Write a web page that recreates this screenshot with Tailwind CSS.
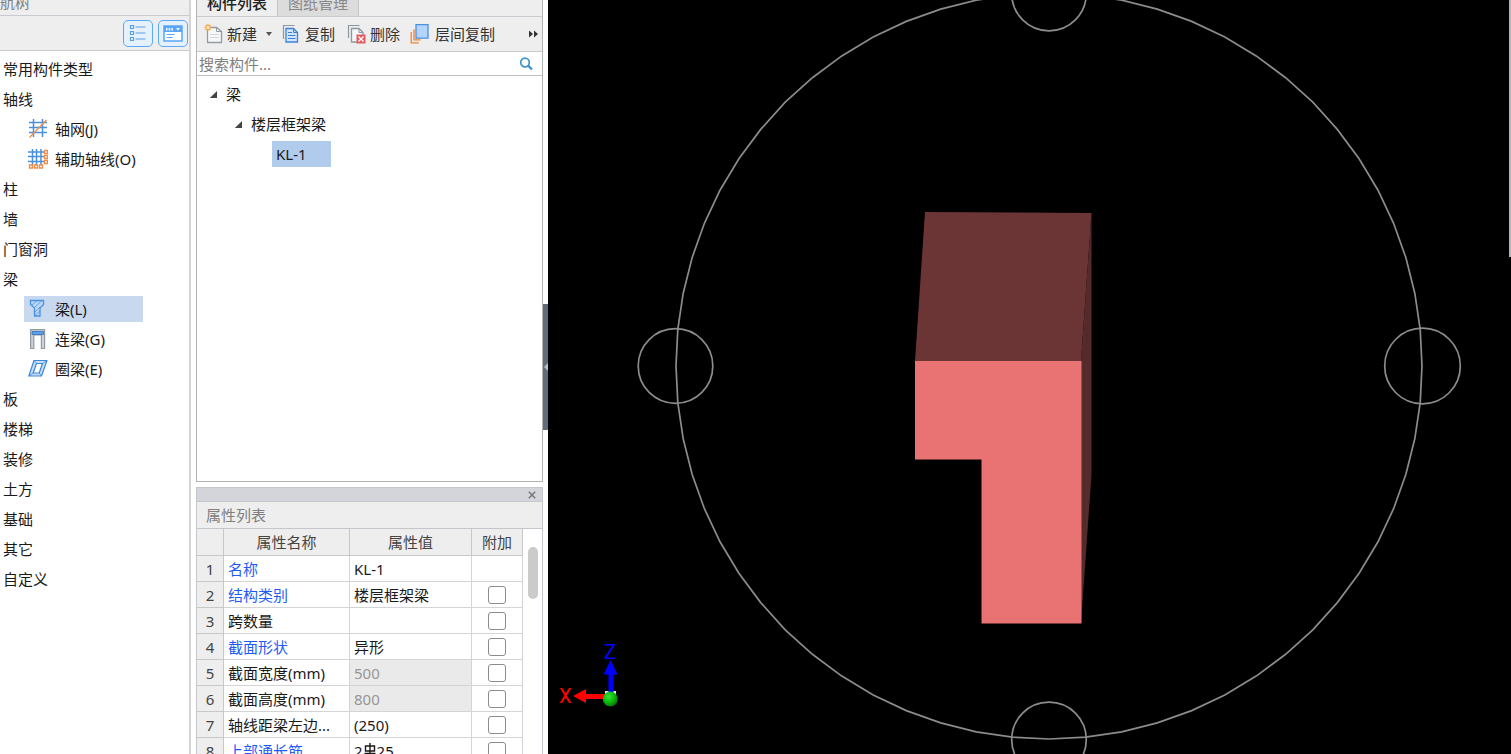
<!DOCTYPE html>
<html lang="zh-CN">
<head>
<meta charset="utf-8">
<title>构件列表</title>
<script src="https://cdn.jsdelivr.net/npm/@tailwindcss/browser@4"></script>
</head>
<body class="flex h-screen overflow-hidden bg-white font-['Noto_Sans','Noto_Sans_CJK_SC',sans-serif] text-[15px] leading-5 text-[#1a1a1a]">

<!-- Navigation tree -->
<nav class="flex w-[191px] shrink-0 flex-col border-r-2 border-[#d4d4d4]">
  <div class="flex h-4 shrink-0 items-end overflow-hidden border-b border-[#c8cad0] bg-[#eee] pb-[3px] text-[#808080]"><h2>航树</h2></div>
  <div class="flex h-[35px] shrink-0 items-center justify-end gap-[5px] border-b border-[#c8cad0] bg-[#eee] pr-px">
    <button aria-label="列表视图" class="flex h-[27px] w-[30px] items-center justify-center rounded-[5px] border border-[#5aa9fb] bg-[#e6f1fe]">
      <svg class="h-[18px] w-[18px]" viewBox="0 0 18 18" fill="none" stroke="#5a9fe0" stroke-width="1.200"><path d="M1.500 1.500h3v3h-3zM1.500 7.500h3v3h-3zM1.500 13.500h3v3h-3zM6.500 3h10M6.500 9h10M6.500 15h10"/></svg>
    </button>
    <button aria-label="面板视图" class="flex h-[27px] w-[30px] items-center justify-center rounded-[5px] border border-[#5aa9fb] bg-[#e6f1fe]">
      <svg class="h-[17px] w-[20px]" viewBox="0 0 20 17"><path fill="#fff" stroke="#5aa5f5" stroke-width="1.500" d="M1 1h18v15H1z"/><path fill="#5aa5f5" d="M1 1h18v6H1z"/><path fill="#fff" d="M3 3h1.500v2.500H3zM5.700 3h1.500v2.500H5.700zM8.400 3h1.500v2.500H8.400zM13 3h4l-2 2.500z"/><path stroke="#5aa5f5" d="M3.500 9.500h8M3.500 12.500h6"/></svg>
    </button>
  </div>
  <ul class="flex flex-col pt-[3px] *:flex *:h-[30px] *:shrink-0 *:items-center">
    <li class="pl-[3px]">常用构件类型</li>
    <li class="pl-[3px]">轴线</li>
    <li class="pl-6"><a href="#" class="flex h-[26px] items-center gap-1.5 pl-1"><svg class="h-5 w-5" viewBox="0 0 20 20" fill="none"><path stroke="#4a90dc" stroke-width="1.500" d="M5.500 0v18M14.500 0v18M1 3.500h18M1 8.500h18M1 13.500h18"/><path stroke="#f08c46" stroke-width="1.300" d="M1.500 18.500 18.500 1"/></svg><span class="pl-px">轴网(J)</span></a></li>
    <li class="pl-6"><a href="#" class="flex h-[26px] items-center gap-1.5 pl-1"><svg class="h-5 w-5" viewBox="0 0 20 20" fill="none"><path stroke="#4a90dc" stroke-width="1.500" d="M4.500 0v16M8.500 0v16M13 0v16M0 3h16M0 7.500h16M0 12.500h16"/><path fill="#fff" stroke="#f08c46" stroke-width="1.300" d="M1.500 16h3v3h-3zM6.500 16h3v3h-3zM11.500 16h3v3h-3zM16.500 1.500h3v3h-3zM16.500 6.500h3v3h-3zM16.500 11.500h3v3h-3z"/></svg><span class="pl-px">辅助轴线(O)</span></a></li>
    <li class="pl-[3px]">柱</li>
    <li class="pl-[3px]">墙</li>
    <li class="pl-[3px]">门窗洞</li>
    <li class="pl-[3px]">梁</li>
    <li class="pl-6"><a href="#" aria-current="page" class="flex h-[26px] w-[119px] items-center gap-1.5 bg-[#c8d8ef] pl-1"><svg class="h-5 w-5" viewBox="0 0 20 20" fill="#b9d8f8"><path stroke="#4a90dc" stroke-width="1.300" d="M2.500 1.500h13v4l-3.500 3.500v8H6.500V9L2.500 5.500z"/><path fill="none" stroke="#4a90dc" stroke-width=".8" d="m4 6 5-4.500M7 8l7-6.500M7 13l5-5M7 16.500l5-4.500"/></svg><span class="pl-px">梁(L)</span></a></li>
    <li class="pl-6"><a href="#" class="flex h-[26px] items-center gap-1.5 pl-1"><svg class="h-5 w-5" viewBox="0 0 20 20"><path fill="#cdd3d8" stroke="#8f9aa3" stroke-width="1.200" d="M2.600.6h14v19h-3.200V6H5.800v13.600H2.600z"/><path fill="#5d9fe6" stroke="#2f74c0" stroke-width=".8" d="M4 2.500h11.500v3H4z"/></svg><span class="pl-px">连梁(G)</span></a></li>
    <li class="pl-6"><a href="#" class="flex h-[26px] items-center gap-1.5 pl-1"><svg class="h-5 w-5" viewBox="0 0 20 20" stroke="#3d86d8" stroke-width="1.200" stroke-linejoin="round"><path fill="#c6defa" d="M6 1.500h13L13.500 17H.8z"/><path fill="#fff" d="M8.500 4.500h6l-3.300 9.500h-6z"/><path d="m6 1.500 2.500 3M19 1.500l-4.500 3M.8 17l4.400-3M13.500 17l-2.300-3" stroke-width=".8"/></svg><span class="pl-px">圈梁(E)</span></a></li>
    <li class="pl-[3px]">板</li>
    <li class="pl-[3px]">楼梯</li>
    <li class="pl-[3px]">装修</li>
    <li class="pl-[3px]">土方</li>
    <li class="pl-[3px]">基础</li>
    <li class="pl-[3px]">其它</li>
    <li class="pl-[3px]">自定义</li>
  </ul>
</nav>

<!-- Component list and properties -->
<aside class="flex w-[352px] shrink-0 flex-col gap-[5px] pl-[5px]">
  <section class="flex min-h-0 flex-1 flex-col border-x border-b border-[#b4b4b4]">
    <div role="tablist" class="flex h-[17px] shrink-0 items-end overflow-hidden border-b border-[#c8cad0] bg-[#eee]">
      <button role="tab" aria-selected="true" class="flex w-20 items-end justify-center pb-[3px] font-medium text-[#222]">构件列表</button>
      <button role="tab" class="flex w-[82px] items-end justify-center border-x border-[#c4c6ca] bg-[#dcdcdc] pb-[3px] text-[#888]">图纸管理</button>
    </div>
    <div class="flex h-[35px] shrink-0 items-center border-b border-[#c8cad0] bg-[#eee] pl-[7px] text-[#333]">
      <button class="flex items-center gap-1"><svg class="h-5 w-[19px]" viewBox="0 0 19 20"><path fill="#f6f7f8" stroke="#939ca4" stroke-width="1.300" d="M3.500 3.500h9l5 4v11h-14z"/><path fill="none" stroke="#939ca4" d="M12.500 3.500v4h5"/><path stroke="#d5dade" d="M6 10.500h9M6 13.500h9"/><path stroke="#f9a63a" stroke-width="1.300" d="M4 0v7M.5 3.500h7M1.500 1l5 5M6.500 1l-5 5"/><circle cx="4" cy="3.500" r="1.500" fill="#fff0d0"/></svg>新建<svg class="ml-1 h-2 w-2" viewBox="0 0 8 8"><path fill="#555" d="M1 2h6L4 6z"/></svg></button>
      <button class="ml-[9px] flex items-center gap-1.5"><svg class="h-5 w-[17px]" viewBox="0 0 17 20"><path fill="none" stroke="#8c979f" stroke-width="1.200" d="M1.500 15V1.500h11"/><path fill="#d3e5fb" stroke="#3d82d9" stroke-width="1.300" d="M4 4.500h7.500l4 4v9.500H4z"/><path fill="none" stroke="#3d82d9" d="M11.500 4.500v4h4M6 8.500h4M6 11.500h7.500M6 14.500h7.500"/></svg>复制</button>
      <button class="ml-3 flex items-center gap-1"><svg class="h-5 w-[19px]" viewBox="0 0 19 20"><path fill="none" stroke="#8c979f" stroke-width="1.200" d="M1.500 14V1.500h11"/><path fill="#f6f7f8" stroke="#8c979f" stroke-width="1.300" d="M4.500 4.500H12l4 4V18H4.500z"/><path fill="none" stroke="#8c979f" d="M12 4.500v4h4"/><path fill="#e25b60" d="M9.500 10.500h9v9h-9z"/><path stroke="#fff" stroke-width="1.400" d="m11.500 12.500 5 5m0-5-5 5"/></svg>删除</button>
      <button class="ml-2.5 flex items-center gap-1.5"><svg class="h-5 w-[19px]" viewBox="0 0 19 20"><path fill="none" stroke="#f08232" stroke-width="1.300" d="M1.200 8v10.800h7.500M4 5.500v10.300h6.500"/><path fill="#b4d5fb" stroke="#4a90e0" stroke-width="1.300" d="M6 .7h12v13.500H6z"/></svg>层间复制</button>
      <button aria-label="更多" class="mr-1 ml-auto"><svg class="h-2 w-[10px]" viewBox="0 0 10 8"><path fill="#333" d="m1 .5 4 3.500-4 3.500zM6 .5 10 4 6 7.500z"/></svg></button>
    </div>
    <label class="flex h-6 shrink-0 items-center border-b border-[#c0c0c0] bg-white pr-[9px] pl-0.5">
      <input type="text" aria-label="搜索构件" placeholder="搜索构件..." class="min-w-0 flex-1 outline-none placeholder:text-[#808080]">
      <svg class="h-[14px] w-[14px]" viewBox="0 0 14 14" fill="none" stroke="#3f94c8"><circle cx="6" cy="5.500" r="4.300" stroke-width="1.700"/><path stroke-width="2.400" d="m9 8.500 4 4"/></svg>
    </label>
    <ul class="flex flex-1 flex-col pt-[3px] *:flex *:h-[30px] *:shrink-0 *:items-center">
      <li class="gap-2 pl-3"><svg class="h-[9px] w-[9px]" viewBox="0 0 9 9"><path fill="#444" d="M8 1v7H.8z"/></svg>梁</li>
      <li class="gap-2 pl-[37px]"><svg class="h-[9px] w-[9px]" viewBox="0 0 9 9"><path fill="#444" d="M8 1v7H.8z"/></svg>楼层框架梁</li>
      <li class="pl-[75px]"><a href="#" class="flex h-[26px] w-[59px] items-center bg-[#b1cbec] pl-1">KL-1</a></li>
    </ul>
  </section>

  <section class="flex h-[267px] shrink-0 flex-col overflow-hidden border-x border-t border-[#c4c6cb]">
    <div class="flex h-[14px] shrink-0 items-center justify-end border-b border-[#c4c6cb] bg-[#d3d5db] pr-1.5">
      <button aria-label="关闭"><svg class="h-2 w-2" viewBox="0 0 8 8"><path stroke="#777" stroke-width="1.500" d="m.8.8 6.400 6.400m0-6.400L.8 7.200"/></svg></button>
    </div>
    <h2 class="flex h-[27px] shrink-0 items-center border-b border-[#c4c6cb] bg-[#eee] pl-[9px] text-[#808080]">属性列表</h2>
    <div class="flex min-h-0 flex-1 items-start">
      <table class="w-[326px] shrink-0 table-fixed border-separate border-spacing-0 [&_td]:h-[26px] [&_td]:border-r [&_td]:border-b [&_td]:border-[#d4d4d4] [&_td]:p-0 [&_td]:pl-1 [&_td]:whitespace-nowrap [&_th]:border-r [&_th]:border-b [&_th]:border-[#c8c8c8] [&_th]:bg-[#eee] [&_th]:p-0 [&_th]:font-normal [&_th]:text-[#444]">
        <colgroup><col class="w-[27px]"><col class="w-[126px]"><col class="w-[122px]"><col class="w-[51px]"></colgroup>
        <thead><tr class="h-[27px]"><th></th><th scope="col">属性名称</th><th scope="col">属性值</th><th scope="col">附加</th></tr></thead>
        <tbody>
          <tr><th scope="row">1</th><td class="text-[#1f5cf5]">名称</td><td>KL-1</td><td></td></tr>
          <tr><th scope="row">2</th><td class="text-[#1f5cf5]">结构类别</td><td>楼层框架梁</td><td><input type="checkbox" aria-label="附加 结构类别" class="ml-3 block size-[18px] appearance-none rounded-[3px] border border-[#8c8c8c] bg-white"></td></tr>
          <tr><th scope="row">3</th><td>跨数量</td><td></td><td><input type="checkbox" aria-label="附加 跨数量" class="ml-3 block size-[18px] appearance-none rounded-[3px] border border-[#8c8c8c] bg-white"></td></tr>
          <tr><th scope="row">4</th><td class="text-[#1f5cf5]">截面形状</td><td>异形</td><td><input type="checkbox" aria-label="附加 截面形状" class="ml-3 block size-[18px] appearance-none rounded-[3px] border border-[#8c8c8c] bg-white"></td></tr>
          <tr><th scope="row">5</th><td>截面宽度(mm)</td><td class="bg-[#eaeaea] text-[#969696]">500</td><td><input type="checkbox" aria-label="附加 截面宽度" class="ml-3 block size-[18px] appearance-none rounded-[3px] border border-[#8c8c8c] bg-white"></td></tr>
          <tr><th scope="row">6</th><td>截面高度(mm)</td><td class="bg-[#eaeaea] text-[#969696]">800</td><td><input type="checkbox" aria-label="附加 截面高度" class="ml-3 block size-[18px] appearance-none rounded-[3px] border border-[#8c8c8c] bg-white"></td></tr>
          <tr><th scope="row">7</th><td>轴线距梁左边...</td><td>(250)</td><td><input type="checkbox" aria-label="附加 轴线距梁左边" class="ml-3 block size-[18px] appearance-none rounded-[3px] border border-[#8c8c8c] bg-white"></td></tr>
          <tr><th scope="row">8</th><td class="text-[#1f5cf5]">上部通长筋</td><td><span class="flex items-center">2<svg role="img" aria-label="三级钢" class="h-[15px] w-[14px]" viewBox="0 0 14 15" fill="none" stroke="#1a1a1a" stroke-width="1.400"><path d="M2.500 3h9v5h-9zM7 0v14M1.500 10.500h11M9.500 10.500v3"/></svg>25</span></td><td><input type="checkbox" aria-label="附加 上部通长筋" class="ml-3 block size-[18px] appearance-none rounded-[3px] border border-[#8c8c8c] bg-white"></td></tr>
        </tbody>
      </table>
      <div class="mt-[18px] ml-[5px] h-[52px] w-[10px] shrink-0 rounded-full bg-[#cbcbcb]"></div>
    </div>
  </section>
</aside>

<!-- Panel collapse handle -->
<div class="flex w-[5px] shrink-0 flex-col pt-[304px]">
  <button aria-label="收起面板" class="flex h-[126px] items-center justify-end bg-[#616c79]"><svg class="h-2 w-1" viewBox="0 0 4 8"><path fill="#b4bbc4" d="M4 0v8L0 4z"/></svg></button>
</div>

<!-- 3D viewport -->
<main class="relative min-w-0 flex-1 bg-black">
  <svg class="block h-full w-full" viewBox="0 0 963 754" preserveAspectRatio="xMidYMid slice">
    <defs>
      <radialGradient id="ball" cx=".4" cy=".35" r=".7"><stop offset="0" stop-color="#3be03b"/><stop offset=".5" stop-color="#0cc00c"/><stop offset="1" stop-color="#067006"/></radialGradient>
    </defs>
    <g fill="none" stroke="#8c8c8c" stroke-width="1.700">
      <polygon id="orbit"/>
      <circle cx="127.500" cy="366" r="37.300"/><circle cx="874.500" cy="366" r="37.800"/>
      <circle cx="501" cy="-6.500" r="37.300"/><circle cx="501" cy="739.500" r="37.300"/>
    </g>
    <path fill="#6c3535" d="m377 212 166.500 1L533 361H367z"/>
    <path fill="#552a2a" d="M543.500 213v262L533 623.500V361z"/>
    <path fill="#e97373" d="M367 361h166.500v262.500h-100V459.500H367z"/>
    <path fill="#e8e8e8" d="M57 691h11v6H57z"/>
    <path fill="#f00" d="M25 696l13-7v5h20v5H38v4z"/>
    <path fill="#00f" d="m62.500 660 7 14.500h-4V692h-5v-17.500h-5z"/>
    <circle cx="62.300" cy="699" r="7.400" fill="url(#ball)"/>
    <text x="11" y="703" fill="#f00" font-family="Roboto" font-size="20">X</text>
    <text x="56" y="659" fill="#00f" font-family="Roboto" font-size="20">Z</text>
  </svg>
  <div class="absolute top-0 right-0 h-[257px] w-0.5 bg-[#b4b4bc]"></div>
</main>

<script>
  // The orbit ring is drawn as a 64-sided polygon.
  const ring = [];
  for (let i = 0; i < 64; i++) {
    const a = i * Math.PI / 32;
    ring.push((501 + 373 * Math.cos(a)).toFixed(1) + ',' + (366 + 373 * Math.sin(a)).toFixed(1));
  }
  document.getElementById('orbit').setAttribute('points', ring.join(' '));
</script>
</body>
</html>
